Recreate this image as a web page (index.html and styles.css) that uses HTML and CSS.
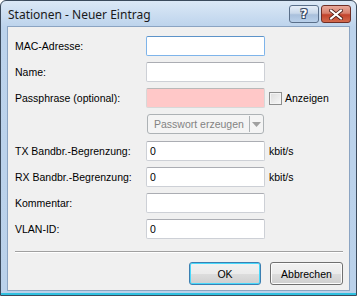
FILE: index.html
```html
<!DOCTYPE html>
<html>
<head>
<meta charset="utf-8">
<link rel="stylesheet" href="styles.css">
</head>
<body>
<div class="window">
  <div class="titlebar">
    <span class="title">Stationen - Neuer Eintrag</span>
    <div class="caption-buttons">
      <div class="cbtn help"><span>?</span></div>
      <div class="cbtn close">
        <svg width="14" height="11" viewBox="0 0 14 11"><path d="M2 1.5 L12 9.5 M12 1.5 L2 9.5" stroke="#4a1e18" stroke-width="3.6" stroke-linecap="square"/><path d="M2 1.5 L12 9.5 M12 1.5 L2 9.5" stroke="#fff" stroke-width="2" stroke-linecap="square"/></svg>
      </div>
    </div>
  </div>
  <div class="client">
    <div class="form">
      <label class="lbl">MAC-Adresse:</label>
      <div class="field focus"></div>
      <div></div>

      <label class="lbl">Name:</label>
      <div class="field"></div>
      <div></div>

      <label class="lbl">Passphrase (optional):</label>
      <div class="field pink"></div>
      <div class="check"><span class="box"></span><span>Anzeigen</span></div>

      <div></div>
      <div class="split"><span class="split-text">Passwort erzeugen</span><span class="split-arrow"><svg width="9" height="5" viewBox="0 0 9 5"><path d="M0 0 H9 L4.5 5 Z" fill="#a0a0a0"/></svg></span></div>
      <div></div>

      <label class="lbl">TX Bandbr.-Begrenzung:</label>
      <div class="field">0</div>
      <div class="unit">kbit/s</div>

      <label class="lbl">RX Bandbr.-Begrenzung:</label>
      <div class="field">0</div>
      <div class="unit">kbit/s</div>

      <label class="lbl">Kommentar:</label>
      <div class="field"></div>
      <div></div>

      <label class="lbl">VLAN-ID:</label>
      <div class="field">0</div>
      <div></div>
    </div>
    <div class="sep"></div>
    <div class="buttons">
      <div class="btn default">OK</div>
      <div class="btn">Abbrechen</div>
    </div>
  </div>
</div>
</body>
</html>
```

FILE: styles.css
```css
html, body {
  margin: 0;
  padding: 0;
  background: #ffffff;
}
.window {
  box-sizing: border-box;
  width: 357px;
  height: 296px;
  border: 1px solid #3b4a5c;
  border-radius: 6px 6px 0 0;
  background: linear-gradient(to bottom, #dbe8f6 0px, #bcd3ec 26px, #bad1ea 100%);
  display: flex;
  flex-direction: column;
  padding: 0 6px 4px 6px;
  box-shadow: inset 0 -2px 0 #2fc0e0;
  font-family: "Liberation Sans", Arial, sans-serif;
  font-size: 10.5px;
  color: #000;
}
.titlebar {
  height: 25px;
  display: flex;
  align-items: center;
  justify-content: space-between;
  flex: none;
}
.title {
  font-family: "Noto Sans", "DejaVu Sans", sans-serif;
  font-size: 12px;
  color: #1a1a1a;
  padding-left: 1px;
  margin-top: 1px;
}
.caption-buttons {
  display: flex;
  align-self: flex-start;
  margin-top: 4px;
  margin-right: -1px;
  gap: 2px;
}
.cbtn {
  box-sizing: border-box;
  height: 18px;
  border: 1px solid #5a6f8a;
  border-radius: 3px;
  display: flex;
  align-items: center;
  justify-content: center;
}
.help {
  width: 30px;
  background: linear-gradient(to bottom, #e6eef8 0%, #c9d8ea 45%, #a9c0dc 55%, #b9d0ea 100%);
}
.help span {
  font-family: "DejaVu Sans", sans-serif;
  font-weight: bold;
  font-size: 12px;
  color: #fff;
  text-shadow: 1px 1px 0 #3a4a66, -1px -1px 0 #3a4a66, 1px -1px 0 #3a4a66, -1px 1px 0 #3a4a66;
}
.close {
  width: 30px;
  border-color: #6e2e26;
  background: linear-gradient(to bottom, #e9a99c 0%, #d7806d 45%, #c2432c 55%, #d26a4d 100%);
}
.client {
  flex: 1;
  background: #f0f0f0;
  border: 1px solid #8ba4c2;
  display: flex;
  flex-direction: column;
  padding: 9px 6px 0 6px;
}
.form {
  display: grid;
  grid-template-columns: 132px 119px auto;
  grid-auto-rows: 20px;
  row-gap: 6px;
  align-items: center;
}
.form > :nth-child(n+13) {
  margin-top: 1px;
}
.lbl {
  padding-left: 1px;
}
.field {
  box-sizing: border-box;
  height: 20px;
  border: 1px solid #cdd0d6;
  border-top-color: #abadb3;
  border-radius: 2px;
  background: #fff;
  padding: 0 3px;
  line-height: 18px;
}
.field.focus {
  border-color: #7eb4ea;
  border-top-color: #5c93c9;
}
.field.pink {
  background: #ffc8c8;
  border-color: #d8d8d8;
  border-top-color: #b8b8b8;
}
.check {
  display: flex;
  align-items: center;
  gap: 3px;
  padding-left: 4px;
}
.box {
  box-sizing: border-box;
  width: 13px;
  height: 13px;
  border: 1px solid #8e8f8f;
  background: linear-gradient(135deg, #dcdcdc, #f8f8f8);
  box-shadow: inset 0 0 0 1px #f4f4f4;
}
.split {
  box-sizing: border-box;
  height: 20px;
  margin-left: 1px;
  width: 117px;
  border: 1px solid #adb2b5;
  border-radius: 3px;
  background: #f4f4f4;
  display: flex;
  align-items: center;
  color: #838383;
}
.split-text {
  flex: 1;
  padding-left: 6px;
  white-space: nowrap;
}
.split-arrow {
  width: 13px;
  height: 16px;
  border-left: 1px solid #adb2b5;
  display: flex;
  align-items: center;
  justify-content: center;
}
.unit {
  padding-left: 4px;
}
.sep {
  margin-top: 13px;
  margin-left: 1px;
  height: 0;
  border-top: 1px solid #a0a0a0;
  border-bottom: 1px solid #ffffff;
}
.buttons {
  display: flex;
  justify-content: flex-end;
  gap: 9px;
  margin-top: 9px;
}
.btn {
  box-sizing: border-box;
  width: 73px;
  height: 23px;
  border: 1px solid #707070;
  border-radius: 3px;
  background: linear-gradient(to bottom, #f2f2f2 0%, #ebebeb 50%, #dddddd 51%, #cfcfcf 100%);
  display: flex;
  align-items: center;
  justify-content: center;
  box-shadow: inset 0 0 0 1px #fcfcfc;
}
.btn.default {
  border-color: #3c7fb1;
  box-shadow: inset 0 0 0 1px #48d8fb;
  width: 72px;
}
```
